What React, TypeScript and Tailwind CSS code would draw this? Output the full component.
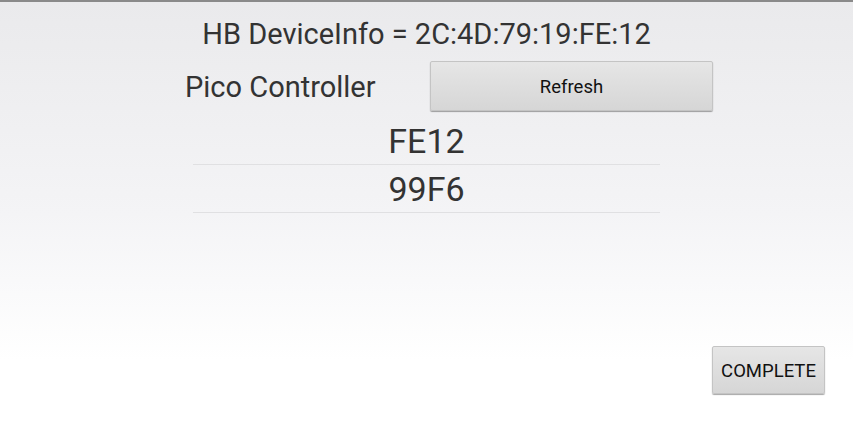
import React from "react";

// Android-style device info screen
const FONT = { fontFamily: "Roboto, 'Noto Sans', sans-serif" };

function HoloButton({ label, className }: { label: string; className: string }) {
  return (
    <button
      className={`flex items-center justify-center rounded-[2px] border border-[#c4c4c4] bg-gradient-to-b from-[#e6e6e6] to-[#d6d6d6] pt-[3px] text-[#111] shadow-[0_1px_1px_rgba(0,0,0,0.35)] ${className}`}
    >
      {label}
    </button>
  );
}

export default function App() {
  const ids = ["FE12", "99F6"];
  return (
    <div
      style={FONT}
      className="flex h-[424px] w-[853px] flex-col overflow-hidden border-t-2 border-[#8a8a8a] bg-gradient-to-b from-[#eaeaec] via-[#f4f4f6] via-50% to-white to-85%"
    >
      <h1 className="mt-[14px] text-center text-[29px] leading-[36px] text-[#333]">
        HB DeviceInfo = 2C:4D:79:19:FE:12
      </h1>

      <div className="mt-[9px] flex items-center">
        <span className="ml-[185px] w-[245px] pt-[3px] text-[29px] text-[#333]">Pico Controller</span>
        <HoloButton label="Refresh" className="h-[50px] w-[283px] text-[18.5px]" />
      </div>

      <ul className="mx-auto mt-[6px] w-[467px]">
        {ids.map((id) => (
          <li
            key={id}
            className="flex h-[48px] items-center justify-center border-b border-[#e0e0e2] pt-[1px] text-[34px] text-[#333]"
          >
            {id}
          </li>
        ))}
      </ul>

      <div className="mt-auto mb-[30px] flex justify-end pr-[28px]">
        <HoloButton label="COMPLETE" className="h-[48px] w-[113px] text-[18.5px]" />
      </div>
    </div>
  );
}
